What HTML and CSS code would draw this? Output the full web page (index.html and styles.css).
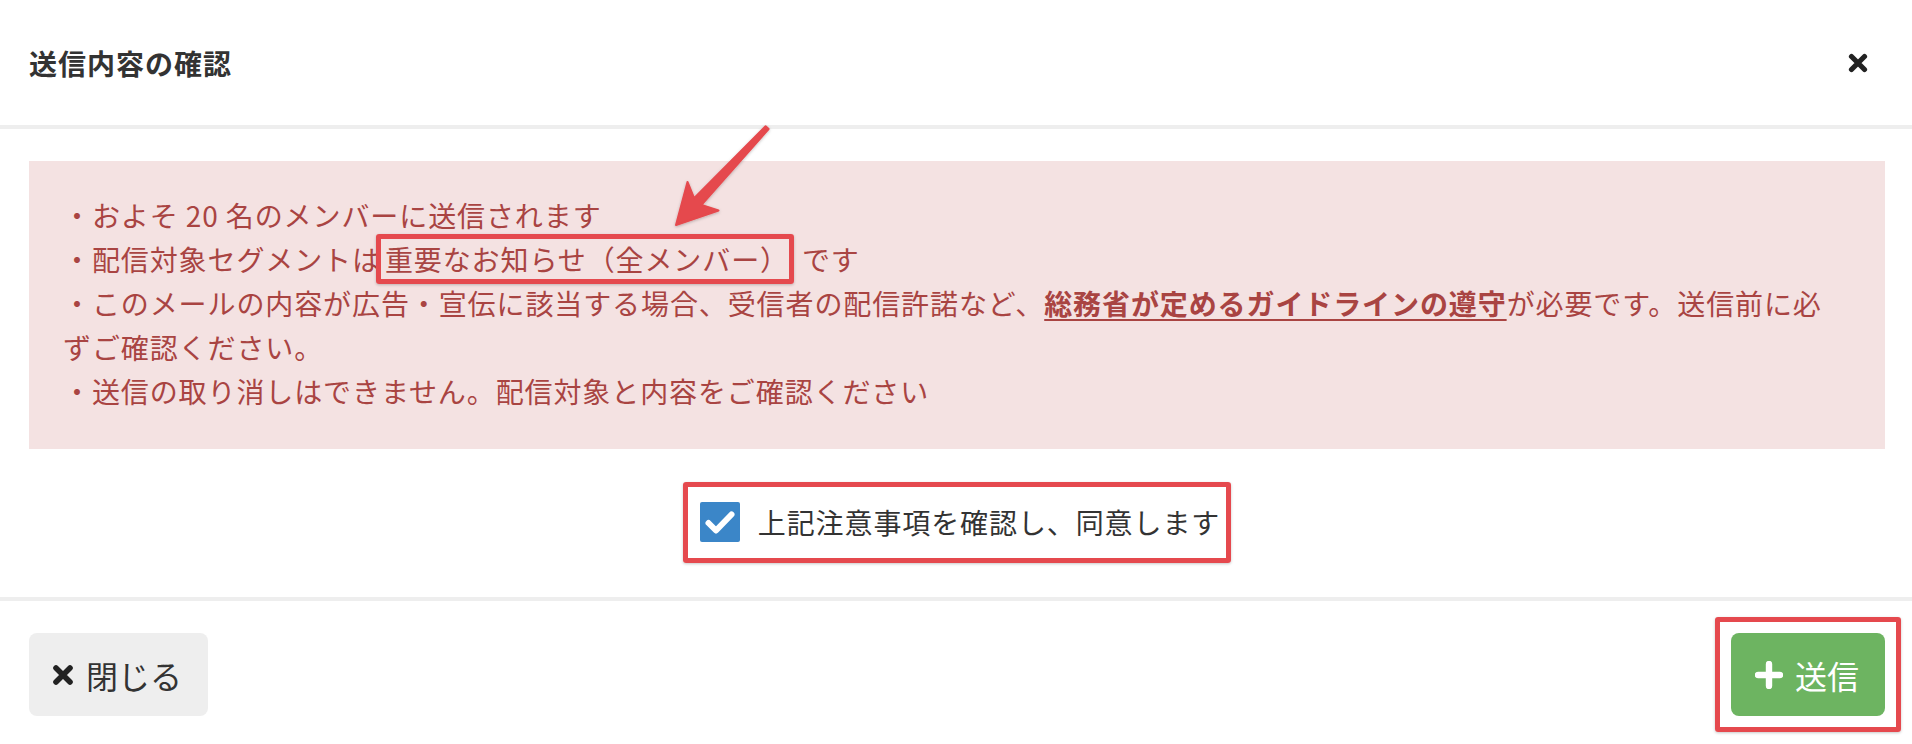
FILE: index.html
```html
<!DOCTYPE html>
<html lang="ja">
<head>
<meta charset="utf-8">
<title>送信内容の確認</title>
<link rel="stylesheet" href="styles.css">
</head>
<body>
<div class="modal">
  <header class="modal-header">
    <h4 class="modal-title">送信内容の確認</h4>
    <button class="close-x" type="button" aria-label="閉じる">
      <svg width="20" height="20" viewBox="0 0 20 20"><path d="M3.5 3.5 L16.5 16.5 M16.5 3.5 L3.5 16.5" stroke="#222" stroke-width="5.2" stroke-linecap="round" fill="none"/></svg>
    </button>
  </header>

  <div class="modal-body">
    <div class="alert">
      <p>・およそ 20 名のメンバーに送信されます</p>
      <p>・配信対象セグメントは<span class="seg">重要なお知らせ（全メンバー）</span>です</p>
      <p>・このメールの内容が広告・宣伝に該当する場合、受信者の配信許諾など、<a class="guide" href="#">総務省が定めるガイドラインの遵守</a>が必要です。送信前に必ずご確認ください。</p>
      <p>・送信の取り消しはできません。配信対象と内容をご確認ください</p>
    </div>

    <div class="agree-row">
      <label class="agree">
        <span class="checkbox">
          <svg width="40" height="40" viewBox="0 0 40 40"><path d="M8.5 21 L16 28.5 L31.5 12.5" stroke="#fff" stroke-width="6" stroke-linecap="round" stroke-linejoin="round" fill="none"/></svg>
        </span>
        <span class="agree-text">上記注意事項を確認し、同意します</span>
      </label>
    </div>
  </div>

  <footer class="modal-footer">
    <button class="btn btn-default" type="button">
      <svg class="btn-icon" width="22" height="22" viewBox="0 0 22 22"><path d="M4 4 L18 18 M18 4 L4 18" stroke="#222" stroke-width="5.6" stroke-linecap="round" fill="none"/></svg>
      <span>閉じる</span>
    </button>
    <button class="btn btn-success" type="button">
      <svg class="btn-icon" width="28" height="28" viewBox="0 0 28 28"><path d="M14 3 L14 25 M3 14 L25 14" stroke="#fff" stroke-width="6.4" stroke-linecap="round" fill="none"/></svg>
      <span>送信</span>
    </button>
  </footer>

  <svg class="arrow" width="1912" height="744" viewBox="0 0 1912 744" aria-hidden="true">
    <defs>
      <filter id="sh" x="-20%" y="-20%" width="140%" height="140%">
        <feDropShadow dx="0" dy="1" stdDeviation="1.5" flood-color="#000" flood-opacity="0.25"/>
      </filter>
    </defs>
    <polygon points="765.6,126.2 694.1,198.1 687.5,182 676,225 718.5,210.5 701.5,204.9 768.6,129" fill="#e5484d" stroke="#e5484d" stroke-width="2" stroke-linejoin="round" filter="url(#sh)"/>
  </svg>
</div>
</body>
</html>
```

FILE: styles.css
```css
* {
  box-sizing: border-box;
}

html, body {
  margin: 0;
  padding: 0;
  background: #ffffff;
}

body {
  font-family: "Noto Sans CJK JP", "Noto Sans", sans-serif;
  color: #333333;
  width: 1912px;
  height: 744px;
  overflow: hidden;
}

.modal {
  position: relative;
  width: 1912px;
  height: 744px;
  background: #ffffff;
}

/* header */
.modal-header {
  height: 129px;
  display: flex;
  align-items: center;
  justify-content: space-between;
  padding: 0 44px 0 29px;
  border-bottom: 4px solid #eeeeee;
}

.modal-title {
  margin: 0;
  font-size: 28px;
  font-weight: 700;
  letter-spacing: 1px;
  color: #333333;
  line-height: 1;
}

.close-x {
  border: 0;
  background: none;
  padding: 0;
  width: 20px;
  height: 20px;
  display: flex;
  cursor: pointer;
}

/* body */
.modal-body {
  padding: 32px 27px 39px 29px;
}

.alert {
  background: #f4e2e2;
  color: #a94442;
  padding: 32px 40px 36px 34px;
  font-size: 28px;
  line-height: 44px;
  letter-spacing: 0.9px;
}

.alert p {
  margin: 0;
}

.seg {
  position: relative;
  padding-left: 4px;
  margin-right: 13px;
}

.seg::after {
  content: "";
  position: absolute;
  left: -5px;
  right: -5px;
  top: -5px;
  bottom: -5px;
  border: 5px solid #e5494e;
  border-radius: 3px;
  box-shadow: 0 1px 3px rgba(0, 0, 0, 0.22);
  pointer-events: none;
}

.guide {
  color: #a94442;
  font-weight: 700;
  text-decoration: underline;
  text-decoration-thickness: 2px;
  text-underline-offset: 4px;
}

.agree-row {
  margin-top: 38px;
  display: flex;
  justify-content: center;
}

.agree {
  position: relative;
  display: inline-flex;
  align-items: center;
  gap: 18px;
  padding: 15px 6px 16px 12px;
  font-size: 28px;
  letter-spacing: 0.9px;
  line-height: 40px;
  color: #333333;
}

.agree::after {
  content: "";
  position: absolute;
  inset: -5px;
  border: 5px solid #e5494e;
  border-radius: 3px;
  box-shadow: 0 1px 3px rgba(0, 0, 0, 0.22);
  pointer-events: none;
}

.checkbox {
  width: 40px;
  height: 40px;
  background: #3b86c8;
  border-radius: 2px;
  display: flex;
}

/* footer */
.modal-footer {
  border-top: 4px solid #eeeeee;
  padding: 32px 27px 28px 29px;
  display: flex;
  justify-content: space-between;
  align-items: center;
}

.btn {
  height: 83px;
  border: 0;
  border-radius: 8px;
  display: inline-flex;
  align-items: center;
  font-family: "Noto Sans CJK JP", "Noto Sans", sans-serif;
  font-size: 32px;
  line-height: 1;
  cursor: pointer;
}

.btn-default {
  background: #eeeeee;
  color: #333333;
  padding: 0 26px 0 23px;
  gap: 12px;
}

.btn-success {
  position: relative;
  background: #6db461;
  color: #ffffff;
  padding: 0 26px 0 24px;
  gap: 12px;
}

.btn-success::after {
  content: "";
  position: absolute;
  inset: -16px;
  border: 5px solid #e5494e;
  border-radius: 3px;
  box-shadow: 0 1px 3px rgba(0, 0, 0, 0.22);
  pointer-events: none;
}

.btn-icon {
  flex: none;
  display: block;
}

/* annotation arrow overlay */
.arrow {
  position: absolute;
  left: 0;
  top: 0;
  pointer-events: none;
}
```
